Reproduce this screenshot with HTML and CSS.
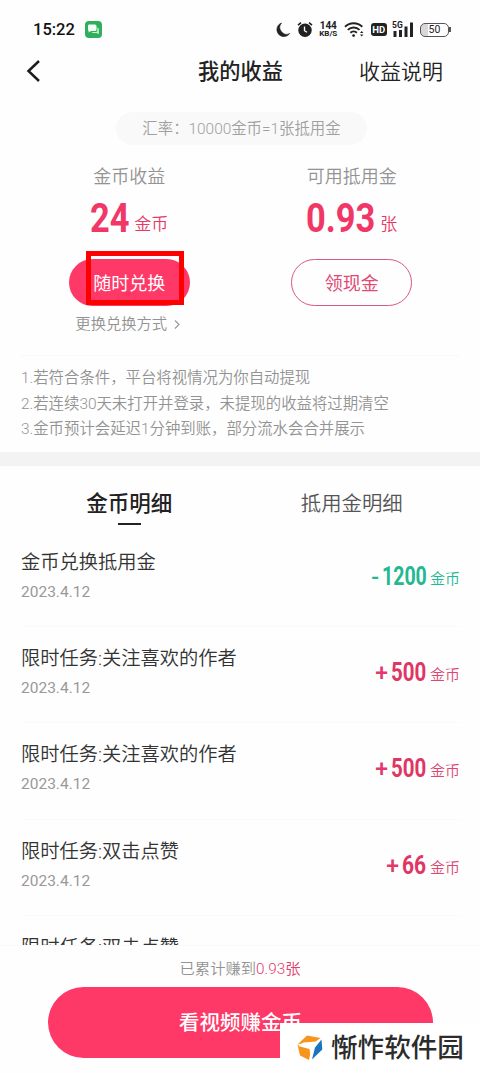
FILE: index.html
```html
<!DOCTYPE html>
<html lang="zh-CN">
<head>
<meta charset="utf-8">
<title>我的收益</title>
<link rel="stylesheet" href="styles.css">
</head>
<body>
<div class="app">
  <div class="status">
    <span class="clock">15:22</span>
    <svg class="msg" width="17" height="17" viewBox="0 0 17 17"><rect width="17" height="17" rx="4" fill="#2fae5c"/><path d="M4 3.500h6a1.500 1.500 0 0 1 1.500 1.500v3.500a1.500 1.500 0 0 1-1.500 1.500H6l-2.300 1.500V10A1.500 1.500 0 0 1 3 8.500V5a1.500 1.500 0 0 1 1-1.500z" fill="#f2fff5"/><path d="M12.300 6.500a1.500 1.500 0 0 1 1.500 1.500v5.300L11.500 12H8a1.500 1.500 0 0 1-1.300-1h4.100a1.500 1.500 0 0 0 1.500-1.500z" fill="#c9efd3"/></svg>
    <div class="status-icons">
      <svg width="15" height="16" viewBox="0 0 15 16"><path d="M5.500 1A7 7 0 1 0 13.700 11.500 6.800 6.800 0 0 1 5.500 1z" fill="#222" stroke="#222" stroke-width=".6"/></svg>
      <svg width="16" height="17" viewBox="0 0 16 17"><circle cx="8" cy="9.300" r="6.700" fill="#222"/><path d="M1 4.200 4 1.700M15 4.200 12 1.700" stroke="#222" stroke-width="1.600"/><path d="M7.500 5.500v4.200l2.500 1.500" stroke="#fff" stroke-width="1.300" fill="none"/></svg>
      <div class="speed"><span>144</span><span>KB/S</span></div>
      <svg width="21" height="17" viewBox="0 0 21 17"><g fill="none" stroke="#222" stroke-width="2"><path d="M1 5.800a12.400 12.400 0 0 1 17.300 0"/><path d="M3.800 8.900a8.400 8.400 0 0 1 11.700 0"/><path d="M6.400 11.700a4.800 4.800 0 0 1 6.500 0"/></g><circle cx="9.600" cy="14.600" r="1.400" fill="#222"/><path d="M16 12l1.700-2 1.700 2zM16 13.600l1.700 2 1.700-2z" fill="#222"/></svg>
      <span class="hd">HD</span>
      <svg width="22" height="17" viewBox="0 0 22 17"><text class="fiveg" x="0" y="7">5G</text><path d="M1.500 10h3v6h-3zM7 9h3v7H7zM12.500 5.500h3V16h-3zM18 1.500h3V16h-3z" fill="#222"/></svg>
      <span class="battery">50</span>
    </div>
  </div>

  <header class="nav">
    <svg class="back" width="16" height="24" viewBox="0 0 16 24"><path d="M15 1 4.500 11 15 21" fill="none" stroke="#1c1c1c" stroke-width="2.500"/></svg>
    <h1 class="nav-title">我的收益</h1>
    <span class="nav-link">收益说明</span>
  </header>

  <div class="rate">汇率：10000金币=1张抵用金</div>

  <section class="summary">
    <div class="account">
      <span class="label">金币收益</span>
      <div class="value"><b class="num num-coin"><i>24</i></b><span class="unit">金币</span></div>
      <div class="btn btn-solid">随时兑换<div class="marker"></div></div>
      <span class="switch">更换兑换方式<svg width="7" height="11" viewBox="0 0 7 11"><path d="M1 1.500 5 5.500 1 9.500" fill="none" stroke="#999" stroke-width="1.200"/></svg></span>
    </div>
    <div class="account">
      <span class="label">可用抵用金</span>
      <div class="value"><b class="num num-cash"><i>0.93</i></b><span class="unit">张</span></div>
      <div class="btn btn-line">领现金</div>
    </div>
  </section>

  <div class="notes">
    <p>1.若符合条件，平台将视情况为你自动提现</p>
    <p>2.若连续30天未打开并登录，未提现的收益将过期清空</p>
    <p>3.金币预计会延迟1分钟到账，部分流水会合并展示</p>
  </div>

  <div class="tabs">
    <span class="tab tab-on">金币明细</span>
    <span class="tab">抵用金明细</span>
  </div>

  <div class="list">
    <div class="row">
      <div class="info"><span class="task">金币兑换抵用金</span><span class="date">2023.4.12</span></div>
      <div class="amount minus"><span class="sign">-</span><b class="figure w4"><i>1200</i></b><span class="coin">金币</span></div>
    </div>
    <div class="row">
      <div class="info"><span class="task">限时任务:关注喜欢的作者</span><span class="date">2023.4.12</span></div>
      <div class="amount"><span class="sign">+</span><b class="figure w3"><i>500</i></b><span class="coin">金币</span></div>
    </div>
    <div class="row">
      <div class="info"><span class="task">限时任务:关注喜欢的作者</span><span class="date">2023.4.12</span></div>
      <div class="amount"><span class="sign">+</span><b class="figure w3"><i>500</i></b><span class="coin">金币</span></div>
    </div>
    <div class="row">
      <div class="info"><span class="task">限时任务:双击点赞</span><span class="date">2023.4.12</span></div>
      <div class="amount"><span class="sign">+</span><b class="figure w2"><i>66</i></b><span class="coin">金币</span></div>
    </div>
    <div class="row">
      <div class="info"><span class="task">限时任务:双击点赞</span></div>
    </div>
  </div>

  <footer class="footer">
    <p class="total">已累计赚到<em>0.93张</em></p>
    <div class="watch">看视频赚金币</div>
    <div class="mark">
      <svg width="26" height="26" viewBox="0 0 26 26"><path d="M1 9 10 .5 23.500 3 17.500 7.500z" fill="#f7941d"/><path d="M.5 9.500 14.500 13 12 25 3 20.500z" fill="#f7941d"/><path d="M24.500 4.500 25.300 14.500 15 24.500 18 12.500z" fill="#1b75bc"/><path d="M6.500 7.500 19.500 6.500 16 13.500 13.500 24 12.600 14 1 11z" fill="#fff"/></svg>
      <span class="mark-name">惭怍软件园</span>
    </div>
  </footer>
</div>
</body>
</html>
```
FILE: styles.css
```css
* { box-sizing: border-box; }
body, h1, p { margin: 0; }
body {
  background: #fff;
  color: #222;
  font-family: Roboto, "Noto Sans CJK SC", sans-serif;
}
i, em { font-style: normal; }
svg { display: block; flex: none; }

.app {
  width: 480px;
  height: 1073px;
  overflow: hidden;
  display: flex;
  flex-direction: column;
  background: #fefefe;
}
.app > * { flex: none; }

.status {
  height: 46px;
  padding: 13px 31px 0 33px;
  display: flex;
  align-items: center;
}
.clock { font-size: 16.500px; font-weight: 500; line-height: 20px; color: #111; }
.msg { margin-left: 10px; }
.status-icons { margin-left: auto; display: flex; align-items: center; gap: 5.700px; }
.speed {
  width: 20px;
  display: flex;
  flex-direction: column;
  align-items: center;
  font-weight: 700;
  font-size: 10px;
  line-height: 9px;
  color: #222;
}
.speed span:last-child { font-size: 8px; line-height: 8px; }
.hd {
  width: 16px;
  height: 13px;
  border-radius: 3px;
  background: #222;
  color: #fff;
  font: 700 9.500px/13px Roboto, sans-serif;
  text-align: center;
}
.fiveg { font: 700 8.500px Roboto, sans-serif; fill: #222; }
.battery {
  position: relative;
  width: 29px;
  height: 14px;
  border: 1.500px solid #555;
  border-radius: 5px;
  background: linear-gradient(90deg, #d8d8d8 7px, #fff 7px);
  font-size: 10.500px;
  line-height: 12px;
  text-align: center;
}
.battery::after {
  content: "";
  position: absolute;
  right: -3px;
  top: 3.500px;
  width: 2px;
  height: 5px;
  background: #555;
}

.nav {
  height: 52px;
  padding: 0 37px 0 24px;
  display: grid;
  grid-template-columns: 102px 1fr 88px;
  align-items: center;
}
.nav-title { font-size: 21.200px; font-weight: 500; text-align: center; line-height: 30px; }
.nav-link { font-size: 21px; text-align: right; line-height: 30px; white-space: nowrap; font-weight: 350; }

.rate {
  width: 251px;
  height: 33px;
  margin: 14px 0 0 116px;
  border-radius: 17px;
  background: #f9f9f9;
  color: #a0a0a0;
  font-size: 15.400px;
  font-weight: 350;
  line-height: 35px;
  text-align: center;
}

.summary {
  height: 210px;
  padding: 19px 17px 0 18px;
  display: grid;
  grid-template-columns: 1fr 1fr;
}
.account { display: flex; flex-direction: column; align-items: center; }
.label { font-size: 18px; line-height: 26px; color: #939393; font-weight: 350; }
.value {
  height: 69px;
  padding-top: 8px;
  display: flex;
  align-items: baseline;
  color: #e53a68;
  font-size: 17px;
  line-height: 40px;
}
.num { font-size: 41px; line-height: 40px; height: 40px; color: #f03766; }
.num i, .figure i { display: block; transform-origin: 0 50%; }
.num-coin { width: 44px; }
.num-coin i { transform: scaleX(0.84); }
.num-cash { width: 74px; }
.num-cash i { transform: scaleX(0.84); }
.unit { position: relative; top: -2px; font-weight: 350; }
.btn {
  position: relative;
  width: 121px;
  height: 47px;
  border-radius: 24px;
  font-size: 18px;
  line-height: 50px;
  text-align: center;
}
.btn-solid { background: #ff3967; color: #fff; }
.btn-line { border: 1.500px solid #d9587f; color: #e04a74; line-height: 48px; }
.marker {
  position: absolute;
  left: 17px;
  top: -8px;
  width: 98px;
  height: 54px;
  border: 5px solid #f00;
}
.switch {
  margin-top: 6px;
  margin-right: 2px;
  display: flex;
  align-items: center;
  gap: 7px;
  font-size: 15.300px;
  font-weight: 350;
  line-height: 24px;
  color: #939393;
}

.notes {
  height: 97px;
  padding: 10px 0 0;
  margin: 0 21px;
  border-top: 1px solid #f9f9f9;
  color: #939393;
  font-size: 15.400px;
  font-weight: 350;
  line-height: 25.500px;
  white-space: nowrap;
}
.tabs {
  height: 79px;
  border-top: 14px solid #f3f3f3;
  padding: 0 17px 0 18px;
  display: grid;
  grid-template-columns: 1fr 1fr;
  justify-items: center;
}
.tab { font-size: 20.400px; line-height: 76px; color: #555; height: 64px; font-weight: 350; }
.tab-on { font-size: 21.500px; font-weight: 500; color: #222; display: flex; flex-direction: column; align-items: center; }
.tab-on::after { content: ""; width: 23px; height: 2px; margin-top: -19px; background: #222; }

.list { height: 414px; margin: 0 20px 0 21px; overflow: hidden; }
.row {
  height: 96.200px;
  display: flex;
  justify-content: space-between;
  border-bottom: 1px solid #fafafa;
}
.info { display: flex; flex-direction: column; padding-top: 17px; }
.task { font-size: 19.250px; line-height: 30px; color: #333; font-weight: 350; }
.date { font-size: 15.500px; line-height: 24px; margin-top: 2px; color: #999; }
.amount { display: flex; align-items: baseline; padding-top: 30px; color: #dc4874; font-size: 15px; line-height: 32px; }
.sign { font-size: 23px; font-weight: 500; margin-right: 3px; line-height: 32px; color: #e03a6a; }
.coin { position: relative; top: -1px; font-weight: 350; }
.figure { font-size: 25px; line-height: 32px; height: 32px; color: #e03664; }
.figure i { transform: scaleX(0.78); }
.w4 { width: 48px; }
.w3 { width: 39px; }
.w3 i { transform: scaleX(0.82); }
.w2 { width: 28px; }
.w2 i { transform: scaleX(0.84); }
.amount.minus, .minus .sign, .minus .figure { color: #23b890; }

.footer {
  position: relative;
  height: 128px;
  border-top: 1px solid #f9f9f9;
  display: flex;
  flex-direction: column;
  align-items: center;
}
.total { margin-top: 11px; font-size: 15.300px; font-weight: 350; line-height: 24px; color: #939393; }
.total em { color: #e0406f; }
.watch {
  width: 385px;
  height: 71px;
  margin: 6px 0 0 1px;
  border-radius: 36px;
  background: #ff3967;
  color: #fff;
  font-size: 20.500px;
  font-weight: 500;
  line-height: 72px;
  text-align: center;
}
.mark {
  position: absolute;
  left: 280px;
  bottom: 0;
  width: 200px;
  height: 50px;
  padding-left: 17px;
  background: #fff;
  display: flex;
  align-items: center;
  gap: 8px;
}
.mark-name { font-size: 26.600px; line-height: 50px; font-weight: 500; color: #2c2c2c; }
```
